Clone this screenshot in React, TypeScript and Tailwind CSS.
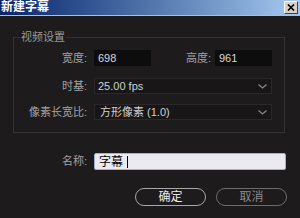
import React from "react";

const font = { fontFamily: '"Liberation Sans", "Noto Sans CJK SC", sans-serif' };

function Chevron() {
  return (
    <svg width="9" height="5" viewBox="0 0 9 5" className="shrink-0">
      <path d="M0.5 0.5 L4.5 4 L8.5 0.5" fill="none" stroke="#8a8889" strokeWidth="1.2" />
    </svg>
  );
}

export default function App() {
  return (
    <div className="w-[300px] h-[218px] bg-[#1d1b1c] flex flex-col overflow-hidden" style={font}>
      {/* title bar */}
      <div className="h-[15px] flex items-center justify-between bg-gradient-to-r from-[#0a246a] to-[#a6caf0] pl-[1px] pr-[2px]">
        <span className="text-white font-bold text-[12px] leading-[15px]">新建字幕</span>
        <div className="w-[14px] h-[13px] bg-[#d4d0c8] border border-t-white border-l-white border-r-[#404040] border-b-[#404040] flex items-center justify-center">
          <svg width="8" height="7" viewBox="0 0 8 7">
            <path d="M1 0.5 L7 6.5 M7 0.5 L1 6.5" stroke="#000" strokeWidth="1.6" />
          </svg>
        </div>
      </div>
      <div className="h-px bg-[#b8bcc8]" />

      {/* body */}
      <div className="flex flex-col pl-[13px] pr-[14px]">
        <fieldset className="mt-[14px] border border-[#343233] w-[272px] pb-[12px]">
          <legend className="ml-[6px] px-[1px] text-[11px] leading-[14px] text-[#9a9899]">视频设置</legend>

          <div className="flex items-center mt-[6px] h-[16px]">
            <span className="w-[74px] text-right text-[11px] text-[#a3a1a2] pr-[1px]">宽度:</span>
            <div className="ml-[6px] w-[57px] h-[16px] bg-[#0e0d0e] flex items-center pl-[4px] text-[11px] text-[#d8d8d8]">698</div>
            <span className="w-[61px] text-right text-[11px] text-[#a3a1a2] pr-[1px]">高度:</span>
            <div className="ml-[3px] w-[57px] h-[16px] bg-[#0e0d0e] flex items-center pl-[4px] text-[11px] text-[#d8d8d8]">961</div>
          </div>

          <div className="flex items-center mt-[12px] h-[16px]">
            <span className="w-[74px] text-right text-[11px] text-[#a3a1a2] pr-[1px]">时基:</span>
            <div className="ml-[6px] w-[178px] h-[16px] bg-[#181617] border border-[#2a2829] flex items-center justify-between pl-[3px] pr-[4px] text-[11px] text-[#d0d0d0]">
              <span>25.00 fps</span>
              <Chevron />
            </div>
          </div>

          <div className="flex items-center mt-[10px] h-[16px]">
            <span className="w-[74px] text-right text-[11px] text-[#a3a1a2] pr-[1px]">像素长宽比:</span>
            <div className="ml-[6px] w-[178px] h-[16px] bg-[#181617] border border-[#2a2829] flex items-center justify-between pl-[5px] pr-[4px] text-[11px] text-[#d0d0d0]">
              <span>方形像素 (1.0)</span>
              <Chevron />
            </div>
          </div>
        </fieldset>

        <div className="flex items-center mt-[20px] h-[17px] pl-[1px]">
          <span className="w-[74px] text-right text-[11px] text-[#a3a1a2] pr-[1px]">名称:</span>
          <div className="ml-[6px] w-[192px] h-[17px] bg-[#ebebef] border border-[#9fb2d0] rounded-[2px] flex items-center pl-[4px] text-[12px] text-black">
            <span>字幕</span>
            <span className="ml-[4px] w-px h-[12px] bg-black" />
          </div>
        </div>

        <div className="flex justify-end gap-[10px] mt-[18px]">
          <button className="w-[71px] h-[18px] rounded-full border-[1.5px] border-[#a8a8a8] text-[12px] leading-none text-[#ededed]">确定</button>
          <button className="w-[71px] h-[18px] rounded-full border-[1.5px] border-[#6e6c6d] text-[12px] leading-none text-[#8c8a8b] mr-[-1px]">取消</button>
        </div>
      </div>
    </div>
  );
}
